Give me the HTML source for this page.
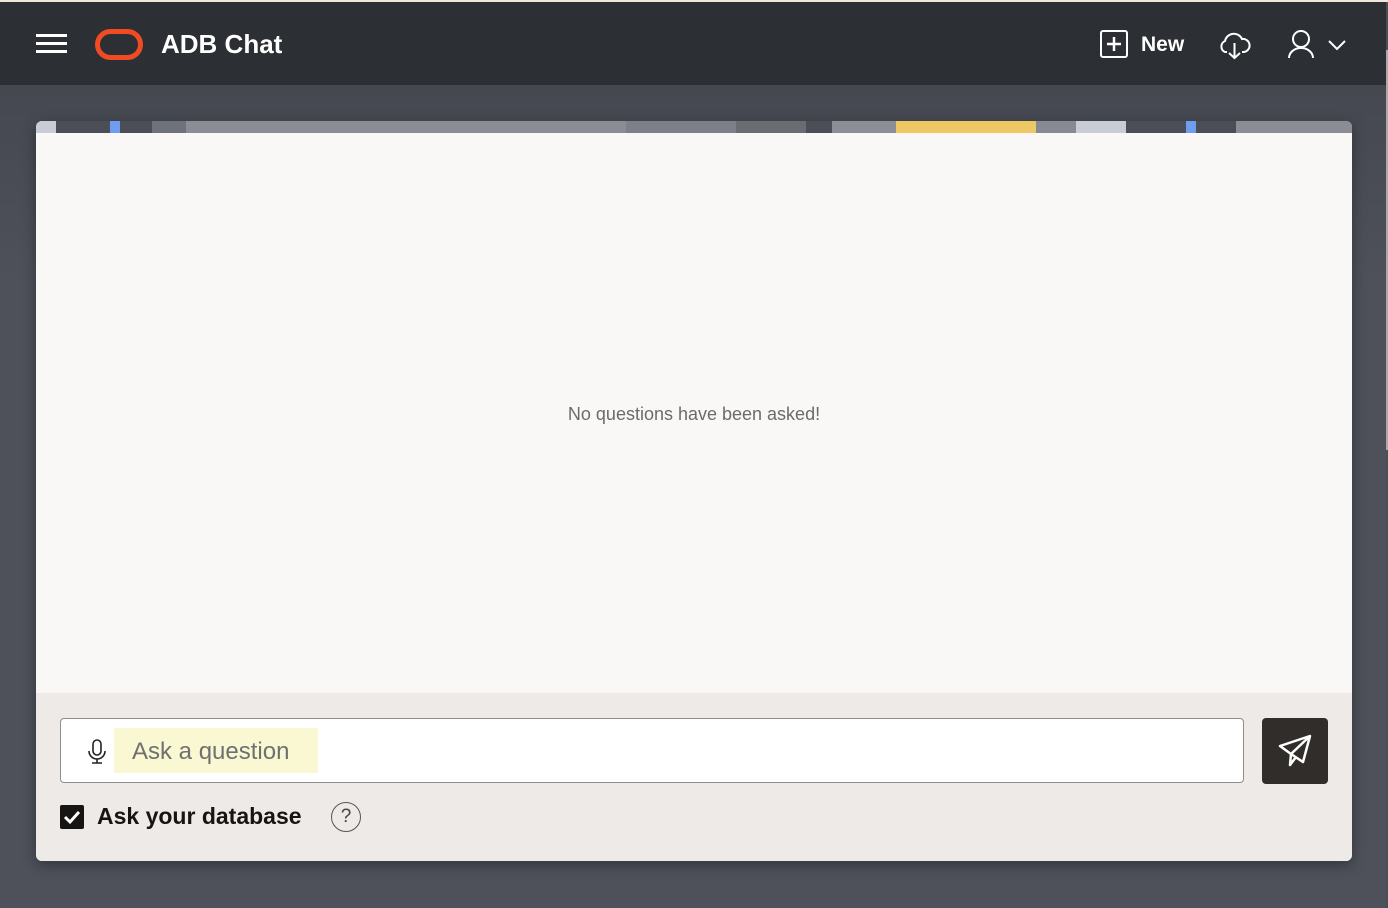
<!DOCTYPE html>
<html><head><meta charset="utf-8"><style>
*{box-sizing:border-box;margin:0;padding:0}
body{width:1388px;height:908px;overflow:hidden;font-family:"Liberation Sans",sans-serif;background:#4b4e56;position:relative}
.top{position:absolute;left:0;top:0;width:1388px;height:2px;background:#f3e6dc}
.hdr{position:absolute;left:0;top:2px;width:1386px;height:83px;background:#2c2f34}
.bg{position:absolute;left:0;top:85px;width:1386px;height:823px;background:linear-gradient(#454850,#4e515a 200px,#4e515a)}
.sb{position:absolute;right:0;top:50px;width:2px;height:400px;background:#aaa}
.card{position:absolute;left:36px;top:121px;width:1316px;height:740px;border-radius:6px;overflow:hidden;background:#f9f8f6;box-shadow:0 4px 14px rgba(0,0,0,.35)}
.strip{height:12px;background:linear-gradient(90deg,#c8ccd6 0 20px,#4b4e56 20px 74px,#6f9ef0 74px 84px,#4b4e56 84px 116px,#6e727a 116px 150px,#8a8d94 150px 590px,#7d8088 590px 700px,#6a6c72 700px 770px,#4b4e56 770px 796px,#8b8e95 796px 860px,#eec864 860px 1000px,#878a92 1000px 1040px,#c8ccd6 1040px 1090px,#4b4e56 1090px 1150px,#6f9ef0 1150px 1160px,#4b4e56 1160px 1200px,#8a8d94 1200px)}
.msg{position:absolute;left:0;top:283px;width:100%;text-align:center;color:#6b6b6b;font-size:18px}
.foot{position:absolute;left:0;bottom:0;width:100%;height:168px;background:#edeae7}
.inp{position:absolute;left:24px;top:25px;width:1184px;height:65px;background:#fff;border:1px solid #8e8e8e;border-radius:4px}
.ph{position:absolute;left:53px;top:9px;width:204px;height:45px;background:#f9f8d2;color:#707070;font-size:24px;line-height:47px;padding-left:18px}
.send{position:absolute;left:1226px;top:25px;width:66px;height:66px;background:#312d2a;border-radius:4px}
.cb{position:absolute;left:24px;top:112px;width:24px;height:24px;background:#161513;border-radius:2px}
.lbl{position:absolute;left:61px;top:110px;font-size:23px;font-weight:bold;color:#161513}
.q{position:absolute;left:295px;top:109px;width:30px;height:30px;border:1.5px solid #555;border-radius:50%;text-align:center;line-height:27px;font-size:19px;color:#444}
.t{position:absolute;color:#fff;font-weight:bold}
</style></head><body>
<div class="top"></div>
<div class="hdr">
 <svg style="position:absolute;left:36px;top:32px" width="31" height="20"><path d="M0 1.5H31M0 9.5H31M0 17.5H31" stroke="#fff" stroke-width="3"/></svg>
 <svg style="position:absolute;left:95px;top:27px" width="48" height="31"><rect x="2.5" y="2.5" width="43" height="26" rx="13" fill="none" stroke="#f04b23" stroke-width="5"/></svg>
 <div class="t" style="left:161px;top:27px;font-size:26px">ADB Chat</div>
 <svg style="position:absolute;left:1100px;top:28px" width="28" height="28" fill="none" stroke="#fff" stroke-width="2"><rect x="1" y="1" width="26" height="26" rx="2"/><path d="M14 7V21M7 14H21" stroke-width="2.5"/></svg>
 <div class="t" style="left:1141px;top:31px;font-size:21px">New</div>
 <svg style="position:absolute;left:1218px;top:28px" width="34" height="30" fill="none" stroke="#fff" stroke-width="2"><path d="M9 22H7A6 6 0 0 1 7 11 9 9 0 0 1 24 9 6.5 6.5 0 0 1 26 22H24"/><path d="M16.5 13V28M11 23L16.5 28 22 23"/></svg>
 <svg style="position:absolute;left:1288px;top:27px" width="28" height="30" fill="none" stroke="#fff" stroke-width="2"><circle cx="13" cy="10" r="8"/><path d="M1 29A12 10 0 0 1 25 29"/></svg>
 <svg style="position:absolute;left:1327px;top:37px" width="20" height="12" fill="none" stroke="#fff" stroke-width="2"><path d="M2 2L10 10 18 2"/></svg>
</div>
<div class="bg"></div>
<div class="sb"></div>
<div class="card">
 <div class="strip"></div>
 <div class="msg">No questions have been asked!</div>
 <div class="foot">
  <div class="inp">
   <svg style="position:absolute;left:26px;top:20px" width="20" height="26" fill="none" stroke="#222" stroke-width="1.6"><rect x="6" y="1" width="8" height="15" rx="4"/><path d="M2 12A8 8 0 0 0 18 12M10 20V24M5 24H15"/></svg>
   <div class="ph">Ask a question</div>
  </div>
  <div class="send"><svg style="position:absolute;left:16px;top:16px" width="36" height="34" fill="none" stroke="#fff" stroke-width="2.5" stroke-linejoin="round"><path d="M2 12L32 2 25 28 13 20Z M13 20L32 2 M13 20L12 31 18 23"/></svg></div>
  <div class="cb"><svg width="24" height="24" fill="none" stroke="#fff" stroke-width="3"><path d="M5 12L10 17 19 7"/></svg></div>
  <div class="lbl">Ask your database</div>
  <div class="q">?</div>
 </div>
</div>
</body></html>
